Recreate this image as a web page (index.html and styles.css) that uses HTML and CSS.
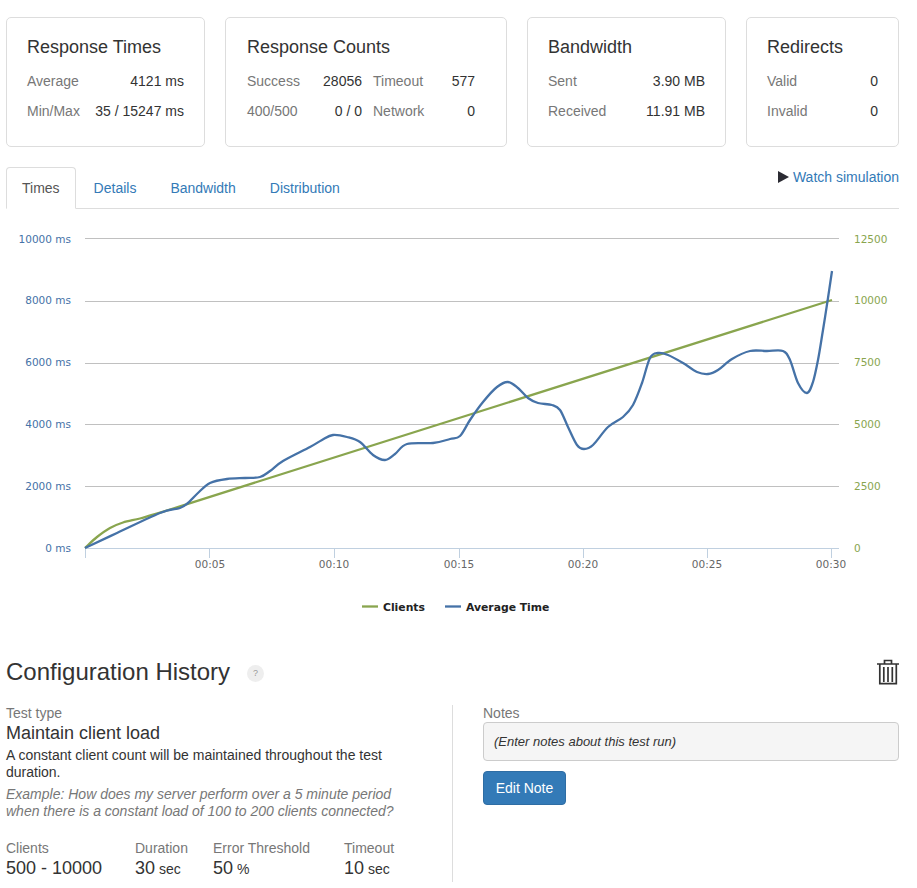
FILE: index.html
```html
<!DOCTYPE html>
<html lang="en">
<head>
<meta charset="utf-8">
<title>Test Results</title>
<link rel="stylesheet" href="styles.css">
</head>
<body>
<main class="page">
  <section class="cards">
    <div class="card card-times">
      <h3>Response Times</h3>
      <div class="col">
        <div class="row"><span class="label">Average</span><span>4121 ms</span></div>
        <div class="row"><span class="label">Min/Max</span><span>35 / 15247 ms</span></div>
      </div>
    </div>
    <div class="card card-counts">
      <h3>Response Counts</h3>
      <div class="cols">
        <div class="col col-a">
          <div class="row"><span class="label">Success</span><span>28056</span></div>
          <div class="row"><span class="label">400/500</span><span>0 / 0</span></div>
        </div>
        <div class="col col-b">
          <div class="row"><span class="label">Timeout</span><span>577</span></div>
          <div class="row"><span class="label">Network</span><span>0</span></div>
        </div>
      </div>
    </div>
    <div class="card card-band">
      <h3>Bandwidth</h3>
      <div class="col">
        <div class="row"><span class="label">Sent</span><span>3.90 MB</span></div>
        <div class="row"><span class="label">Received</span><span>11.91 MB</span></div>
      </div>
    </div>
    <div class="card card-redir">
      <h3>Redirects</h3>
      <div class="col">
        <div class="row"><span class="label">Valid</span><span>0</span></div>
        <div class="row"><span class="label">Invalid</span><span>0</span></div>
      </div>
    </div>
  </section>

  <nav class="tabs">
    <ul class="tab-list">
      <li class="tab active">Times</li>
      <li class="tab">Details</li>
      <li class="tab">Bandwidth</li>
      <li class="tab">Distribution</li>
    </ul>
    <a class="watch" href="#">
      <svg class="play" width="11" height="12" viewBox="0 0 11 12"><path d="M0 0L11 6L0 12Z"/></svg>
      Watch simulation
    </a>
  </nav>

  <svg class="chart" width="893" height="450" viewBox="6 209 893 450">
    <g class="grid">
      <path d="M85 238.500H839M85 301.500H839M85 363.500H839M85 424.500H839M85 486.500H839"/>
    </g>
    <path class="axis" d="M85 548.500H839M85.500 548V558M209.500 548V558M334.500 548V558M459.500 548V558M583.500 548V558M707.500 548V558M831.500 548V558"/>
    <g class="ylab">
      <text x="71" y="243">10000 ms</text>
      <text x="71" y="304">8000 ms</text>
      <text x="71" y="366">6000 ms</text>
      <text x="71" y="428">4000 ms</text>
      <text x="71" y="490">2000 ms</text>
      <text x="71" y="552">0 ms</text>
    </g>
    <g class="rlab">
      <text x="854" y="243">12500</text>
      <text x="854" y="304">10000</text>
      <text x="854" y="366">7500</text>
      <text x="854" y="428">5000</text>
      <text x="854" y="490">2500</text>
      <text x="854" y="552">0</text>
    </g>
    <g class="xlab">
      <text x="210" y="568">00:05</text>
      <text x="334" y="568">00:10</text>
      <text x="459" y="568">00:15</text>
      <text x="583" y="568">00:20</text>
      <text x="707" y="568">00:25</text>
      <text x="831" y="568">00:30</text>
    </g>
    <path id="clients" class="line-clients" d=""/>
    <path id="avg" class="line-avg" d=""/>
    <g class="legend">
      <path class="line-clients" d="M362 606.500H378"/>
      <text x="383" y="611">Clients</text>
      <path class="line-avg" d="M445 606.500H461"/>
      <text x="466" y="611">Average Time</text>
    </g>
  </svg>

  <header class="config-head">
    <div class="config-title">
      <h2>Configuration History</h2>
      <span class="help">?</span>
    </div>
    <svg class="trash" width="22" height="26" viewBox="0 0 22 26">
      <path d="M0 5H22M7.500 4.500V1.500H14.500V4.500M2.800 5.500V24.600H19.300V5.500M6.800 8V23M11 8V23M15.300 8V23"/>
    </svg>
  </header>

  <section class="config">
    <div class="config-left">
      <div class="label">Test type</div>
      <div class="type-name">Maintain client load</div>
      <p class="desc">A constant client count will be maintained throughout the test duration.</p>
      <p class="example">Example: How does my server perform over a 5 minute period when there is a constant load of 100 to 200 clients connected?</p>
      <div class="stats">
        <div><div class="label">Clients</div><div class="value">500 - 10000</div></div>
        <div><div class="label">Duration</div><div class="value">30 <small>sec</small></div></div>
        <div><div class="label">Error Threshold</div><div class="value">50 <small>%</small></div></div>
        <div><div class="label">Timeout</div><div class="value">10 <small>sec</small></div></div>
      </div>
    </div>
    <div class="config-right">
      <div class="label">Notes</div>
      <div class="notes">(Enter notes about this test run)</div>
      <button class="btn" type="button">Edit Note</button>
    </div>
  </section>
</main>
<script src="chart.js"></script>
</body>
</html>
```

FILE: styles.css
```css
* { box-sizing: border-box; }
html, body { margin: 0; padding: 0; background: #fff; }
body {
  font-family: "Liberation Sans", Arial, sans-serif;
  font-size: 14px;
  line-height: 17px;
  color: #333;
}
.page { width: 893px; margin-left: 6px; padding-top: 17px; }

.cards { display: flex; gap: 20px; }
.card {
  height: 130px;
  border: 1px solid #ddd;
  border-radius: 5px;
  padding: 19px 20px 0 20px;
}
.card h3 { margin: 0 0 9px; font-size: 18px; font-weight: 400; line-height: 20px; color: #333; }
.card-times, .card-band { width: 199px; }
.card-counts { width: 282px; padding-left: 21px; }
.card-redir { width: 153px; }
.cols { display: flex; gap: 11px; }
.col-a { width: 115px; }
.col-b { width: 102px; }
.row { display: flex; justify-content: space-between; height: 30px; align-items: center; white-space: nowrap; }
.label { color: #777; }

.tabs { display: flex; justify-content: space-between; margin-top: 20px; border-bottom: 1px solid #ddd; height: 42px; }
.tab-list { display: flex; gap: 2px; list-style: none; margin: 0; padding: 0; }
.tab {
  height: 42px;
  padding: 12px 15px 0;
  border: 1px solid transparent;
  border-radius: 4px 4px 0 0;
  color: #337ab7;
}
.tab.active { color: #555; background: #fff; border-color: #ddd #ddd transparent; }
.watch { display: flex; align-items: center; gap: 4px; height: 20px; color: #337ab7; text-decoration: none; }
.play { fill: #2b2b33; }

.chart { display: block; font-family: "DejaVu Sans", Verdana, sans-serif; }
.grid path { stroke: #c0c0c0; stroke-width: 1; fill: none; }
.axis { stroke: #c0d0e0; stroke-width: 1; fill: none; }
.ylab text { font-size: 10.5px; fill: #4572a7; text-anchor: end; }
.rlab text { font-size: 10.5px; fill: #89a54e; }
.xlab text { font-size: 10.5px; fill: #666; text-anchor: middle; }
.line-clients { stroke: #89a54e; stroke-width: 2.3; fill: none; stroke-linejoin: round; }
.line-avg { stroke: #4572a7; stroke-width: 2.3; fill: none; stroke-linejoin: round; }
.legend text { font-size: 10.8px; font-weight: 700; fill: #222; }

.config-head { display: flex; justify-content: space-between; align-items: center; height: 26px; }
.config-title { display: flex; align-items: center; gap: 17px; }
.config-title h2 { margin: 0; font-size: 24px; font-weight: 400; line-height: 26px; color: #333; }
.help {
  display: flex; align-items: center; justify-content: center;
  width: 17px; height: 17px; margin-top: 3px;
  border-radius: 50%;
  background: #eee; color: #999; font-size: 9px;
}
.trash { fill: none; stroke: #333; stroke-width: 1.7; }

.config { display: flex; margin-top: 20px; height: 177px; }
.config-left { width: 447px; padding-right: 55px; border-right: 1px solid #ddd; }
.config-right { flex: 1; padding-left: 30px; }
.type-name { font-size: 18px; line-height: 22px; }
.desc { margin: 3px 0 0; }
.example { margin: 5px 0 0; font-style: italic; color: #777; }
.stats { display: grid; grid-template-columns: 129px 78px 131px auto; margin-top: 20px; white-space: nowrap; }
.value { font-size: 18px; line-height: 22px; }
.value small { font-size: 14px; margin-left: -1px; }

.notes {
  height: 39px;
  padding: 10px;
  background: #f5f5f5;
  border: 1px solid #ccc;
  border-radius: 4px;
  font-size: 13px;
  font-style: italic;
}
.btn {
  display: block;
  margin-top: 10px;
  width: 83px; height: 34px;
  padding: 0;
  background: #337ab7;
  border: 1px solid #2e6da4;
  border-radius: 4px;
  color: #fff;
  font: 14px "Liberation Sans", Arial, sans-serif;
}
```

FILE: chart.js
```js
// Draws the two series as smooth lines through their sampled points.
var avg = [[85,548],[117,533],[160,513],[180,508],[188,503],[199,492],[210,483],[227,479],[245,478],[260,477],[270,471],[283,461],[310,447],[322,440],[333,435],[347,437],[360,442],[373,455],[385,460],[395,454],[407,444],[433,443],[450,439],[460,436],[470,420],[483,402],[497,387],[508,382],[518,388],[528,398],[538,403],[552,405],[560,410],[568,427],[577,445],[584,449],[593,445],[608,427],[623,417],[633,405],[642,383],[650,358],[658,353],[668,355],[683,363],[697,372],[708,374],[718,370],[732,359],[750,351],[767,351],[783,351],[790,360],[798,383],[807,393],[813,382],[818,360],[823,330],[828,298],[832,271]];
var clientsCurve = [[85,548],[97,537],[110,528],[123,522.5],[140,518.5],[160,512.6],[180,506.3]];
var clientsEnd = [832,300];

function smooth(p) {
  var d = "M" + p[0][0] + " " + p[0][1];
  for (var i = 0; i < p.length - 1; i++) {
    var a = p[Math.max(i - 1, 0)], b = p[i], c = p[i + 1], e = p[Math.min(i + 2, p.length - 1)];
    d += "C" + (b[0] + (c[0] - a[0]) / 6).toFixed(1) + " " + (b[1] + (c[1] - a[1]) / 6).toFixed(1) +
      " " + (c[0] - (e[0] - b[0]) / 6).toFixed(1) + " " + (c[1] - (e[1] - b[1]) / 6).toFixed(1) +
      " " + c[0] + " " + c[1];
  }
  return d;
}

document.getElementById("avg").setAttribute("d", smooth(avg));
document.getElementById("clients").setAttribute("d", smooth(clientsCurve) + "L" + clientsEnd[0] + " " + clientsEnd[1]);
```
